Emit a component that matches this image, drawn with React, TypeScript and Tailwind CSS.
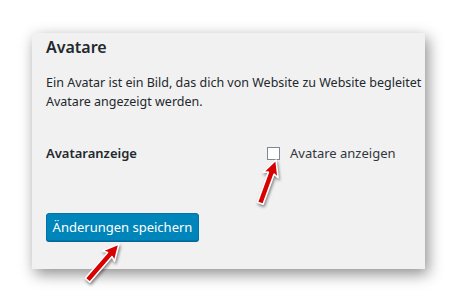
const Arrow = ({ x, y, angle, len }: { x: number; y: number; angle: number; len: number }) => (
  <g transform={`translate(${x} ${y}) rotate(${angle})`}>
    <polygon
      points={`0,0 8,16 3,14 3,${len} -3,${len} -3,14 -8,16`}
      fill="#d80000"
      stroke="#ffffff"
      strokeWidth="1.6"
      strokeLinejoin="round"
    />
  </g>
);

export default function App() {
  return (
    <div className="relative w-[457px] h-[302px] bg-white overflow-hidden font-['Noto_Sans',sans-serif] text-[#23282d]">
      <div className="pt-[33px] pl-[32px]">
        <div className="w-[393px] h-[236px] bg-[#f1f1f1] overflow-hidden shadow-[3px_5px_14px_rgba(0,0,0,0.45)] pl-[14px] pt-[4px]">
          <h2 className="text-[16px] leading-[20px] font-semibold">Avatare</h2>
          <p className="mt-[16px] text-[12.5px] leading-[19px] whitespace-nowrap">
            Ein Avatar ist ein Bild, das dich von Website zu Website begleitet und
            <br />
            Avatare angezeigt werden.
          </p>
          <div className="mt-[33px] flex items-center text-[13px] leading-[19px]">
            <div className="w-[221px] font-semibold">Avataranzeige</div>
            <label className="flex items-center gap-[10px]">
              <span className="w-[13px] h-[13px] border border-[#7e8993] bg-white" />
              <span className="text-[#32373c]">Avatare anzeigen</span>
            </label>
          </div>
          <button className="mt-[50px] h-[28px] w-[153px] rounded-[3px] bg-[#0085ba] border border-[#0073aa] shadow-[0_1px_0_#006799] text-white text-[13px] leading-[26px] text-center">
            Änderungen speichern
          </button>
        </div>
      </div>
      <svg
        className="absolute inset-0 pointer-events-none"
        width="457"
        height="302"
        style={{ filter: "drop-shadow(1px 2px 1.5px rgba(0,0,0,0.45))" }}
      >
        <Arrow x={276} y={160} angle={20} len={46} />
        <Arrow x={119} y={244} angle={41} len={48} />
      </svg>
    </div>
  );
}
